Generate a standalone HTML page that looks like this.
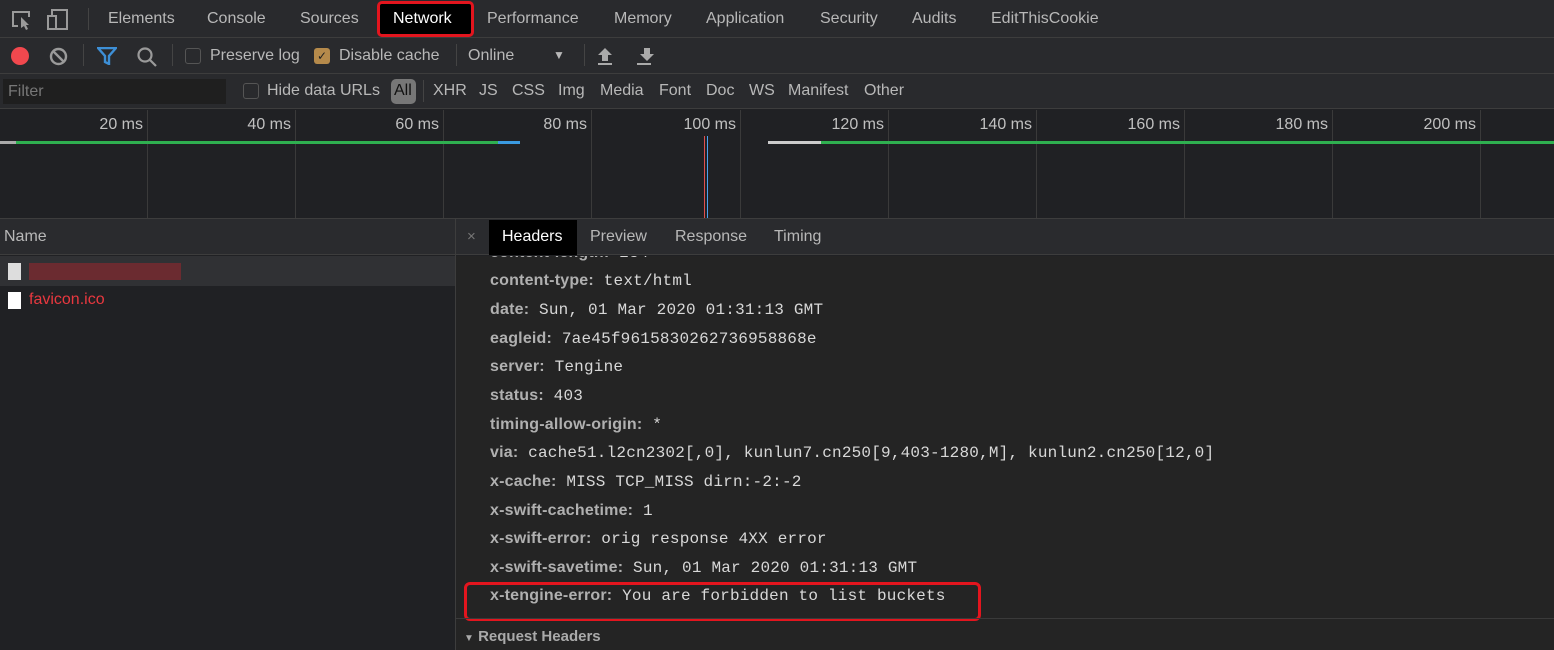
<!DOCTYPE html>
<html><head><meta charset="utf-8"><style>
*{margin:0;padding:0;box-sizing:border-box}
body{width:1554px;height:650px;overflow:hidden;background:#202124;font-family:"Liberation Sans",sans-serif;color:#c8c8c8;position:relative}
.abs{position:absolute}
.bar{position:absolute;left:0;width:1554px;background:#292a2d;border-bottom:1px solid #3d3d3d}
.t{position:absolute;font-size:16px;color:#b8b8b8;white-space:nowrap}
.mono{font-family:"Liberation Mono",monospace;font-size:16px;color:#d8d8d8;letter-spacing:0.2px}
.k{font-size:16px;color:#b0b0b0;font-weight:bold;font-family:"Liberation Sans",sans-serif;letter-spacing:0.2px}
.row{position:absolute;left:490px;white-space:nowrap}
.vl{position:absolute;top:110px;height:108px;width:1px;background:#3a3a3a}
.ms{position:absolute;top:116px;font-size:16px;color:#c0c0c0;text-align:right;width:100px}
</style></head><body>
<div class="bar" style="top:0;height:38px"></div>
<div class="bar" style="top:38px;height:36px"></div>
<div class="bar" style="top:74px;height:35px"></div>
<svg class="abs" style="left:10px;top:8px" width="60" height="24" viewBox="0 0 60 24" fill="none" stroke="#9a9a9a" stroke-width="2">
<path d="M8 18H3V4h16v5"/><path d="M11 9l8 8-3 0 2 4-2 1-2-4-3 2z" fill="#9a9a9a" stroke="none"/>
<rect x="38" y="8" width="8" height="13"/><path d="M42 8V2h15v19h-11"/>
</svg>
<div class="abs" style="left:88px;top:8px;width:1px;height:22px;background:#444"></div>
<div class="t" style="left:108px;top:10px">Elements</div>
<div class="t" style="left:207px;top:10px">Console</div>
<div class="t" style="left:300px;top:10px">Sources</div>
<div class="abs" style="left:377px;top:1px;width:97px;height:36px;background:#000;border:3px solid #e3151e;border-radius:5px"></div>
<div class="t" style="left:393px;top:10px;color:#fff">Network</div>
<div class="t" style="left:487px;top:10px">Performance</div>
<div class="t" style="left:614px;top:10px">Memory</div>
<div class="t" style="left:706px;top:10px">Application</div>
<div class="t" style="left:820px;top:10px">Security</div>
<div class="t" style="left:912px;top:10px">Audits</div>
<div class="t" style="left:991px;top:10px">EditThisCookie</div>
<div class="abs" style="left:11px;top:47px;width:18px;height:18px;border-radius:50%;background:#f1484e"></div>
<svg class="abs" style="left:49px;top:47px" width="19" height="19" viewBox="0 0 19 19" fill="none" stroke="#9a9a9a" stroke-width="2.4"><circle cx="9.5" cy="9.5" r="7.5"/><path d="M4.5 4.5l10 10"/></svg>
<div class="abs" style="left:83px;top:44px;width:1px;height:22px;background:#444"></div>
<svg class="abs" style="left:97px;top:47px" width="20" height="18" viewBox="0 0 20 18"><path d="M1 1h18l-7 8v8l-4-2V9z" fill="none" stroke="#3d8fd6" stroke-width="2.4"/></svg>
<svg class="abs" style="left:136px;top:46px" width="22" height="22" viewBox="0 0 22 22" fill="none" stroke="#9a9a9a" stroke-width="2.2"><circle cx="9" cy="9" r="6.5"/><path d="M14 14l6 6"/></svg>
<div class="abs" style="left:172px;top:44px;width:1px;height:22px;background:#444"></div>
<div class="abs" style="left:185px;top:48px;width:16px;height:16px;border:1.5px solid #555;border-radius:3px"></div>
<div class="t" style="left:210px;top:47px">Preserve log</div>
<div class="abs" style="left:314px;top:48px;width:16px;height:16px;background:#b58a4b;border-radius:3px;color:#222;font-size:12px;text-align:center;line-height:16px">✓</div>
<div class="t" style="left:339px;top:47px">Disable cache</div>
<div class="abs" style="left:456px;top:44px;width:1px;height:22px;background:#444"></div>
<div class="t" style="left:468px;top:47px">Online</div>
<div class="t" style="left:553px;top:48px;font-size:12px">▼</div>
<div class="abs" style="left:584px;top:44px;width:1px;height:22px;background:#444"></div>
<svg class="abs" style="left:597px;top:46px" width="60" height="20" viewBox="0 0 60 20" fill="#aaa"><path d="M8 2l7 7h-4v6H5V9H1z"/><rect x="1" y="17" width="14" height="2"/><path d="M47 2h6v6h4l-7 7-7-7h4z"/><rect x="40" y="17" width="14" height="2"/></svg>
<div class="abs" style="left:3px;top:79px;width:223px;height:25px;background:#1f1f1f"></div>
<div class="t" style="left:8px;top:83px;color:#777">Filter</div>
<div class="abs" style="left:243px;top:83px;width:16px;height:16px;border:1.5px solid #555;border-radius:3px"></div>
<div class="t" style="left:267px;top:82px">Hide data URLs</div>
<div class="abs" style="left:391px;top:79px;width:25px;height:25px;background:#777;border-radius:5px"></div>
<div class="t" style="left:394px;top:82px;color:#111">All</div>
<div class="abs" style="left:423px;top:80px;width:1px;height:22px;background:#444"></div>
<div class="t" style="left:433px;top:82px">XHR</div>
<div class="t" style="left:479px;top:82px">JS</div>
<div class="t" style="left:512px;top:82px">CSS</div>
<div class="t" style="left:558px;top:82px">Img</div>
<div class="t" style="left:600px;top:82px">Media</div>
<div class="t" style="left:659px;top:82px">Font</div>
<div class="t" style="left:706px;top:82px">Doc</div>
<div class="t" style="left:749px;top:82px">WS</div>
<div class="t" style="left:788px;top:82px">Manifest</div>
<div class="t" style="left:864px;top:82px">Other</div>
<div class="vl" style="left:147px"></div><div class="vl" style="left:295px"></div><div class="vl" style="left:443px"></div><div class="vl" style="left:591px"></div><div class="vl" style="left:740px"></div><div class="vl" style="left:888px"></div><div class="vl" style="left:1036px"></div><div class="vl" style="left:1184px"></div><div class="vl" style="left:1332px"></div><div class="vl" style="left:1480px"></div>
<div class="ms" style="left:43px">20 ms</div><div class="ms" style="left:191px">40 ms</div><div class="ms" style="left:339px">60 ms</div><div class="ms" style="left:487px">80 ms</div><div class="ms" style="left:636px">100 ms</div><div class="ms" style="left:784px">120 ms</div><div class="ms" style="left:932px">140 ms</div><div class="ms" style="left:1080px">160 ms</div><div class="ms" style="left:1228px">180 ms</div><div class="ms" style="left:1376px">200 ms</div>
<div class="abs" style="left:0;top:141px;width:16px;height:3px;background:#aaa"></div>
<div class="abs" style="left:16px;top:141px;width:482px;height:3px;background:#2fb050"></div>
<div class="abs" style="left:498px;top:141px;width:22px;height:3px;background:#3a9ae0"></div>
<div class="abs" style="left:768px;top:141px;width:53px;height:3px;background:#ccc"></div>
<div class="abs" style="left:821px;top:141px;width:733px;height:3px;background:#2fb050"></div>
<div class="abs" style="left:704px;top:136px;width:1px;height:82px;background:#e05050"></div>
<div class="abs" style="left:707px;top:136px;width:1px;height:82px;background:#4aa0f0"></div>
<div class="abs" style="left:0;top:218px;width:1554px;height:1px;background:#3d3d3d"></div>
<div class="abs" style="left:0;top:219px;width:455px;height:36px;background:#2a2b2e;border-bottom:1px solid #3d3d3d"></div>
<div class="t" style="left:4px;top:228px">Name</div>
<div class="abs" style="left:0;top:256px;width:455px;height:30px;background:#303134"></div>
<div class="abs" style="left:8px;top:263px;width:13px;height:17px;background:#ddd"></div>
<div class="abs" style="left:29px;top:263px;width:152px;height:17px;background:#7a2a30;opacity:.8"></div>
<div class="abs" style="left:8px;top:292px;width:13px;height:17px;background:#fff"></div>
<div class="t" style="left:29px;top:291px;color:#e8383f">favicon.ico</div>
<div class="abs" style="left:455px;top:219px;width:1px;height:431px;background:#3d3d3d"></div>
<div class="abs" style="left:456px;top:219px;width:1098px;height:36px;background:#2a2b2e;border-bottom:1px solid #3d3d3d"></div>
<div class="t" style="left:467px;top:228px;color:#777;font-size:15px">×</div>
<div class="abs" style="left:489px;top:220px;width:88px;height:35px;background:#000"></div>
<div class="t" style="left:502px;top:228px;color:#fff">Headers</div>
<div class="t" style="left:590px;top:228px">Preview</div>
<div class="t" style="left:675px;top:228px">Response</div>
<div class="t" style="left:774px;top:228px">Timing</div>
<div class="abs" style="left:456px;top:256px;width:1098px;height:394px;background:#242424;overflow:hidden">
<div class="row mono" style="left:34px;top:-12px"><span class="k">content-length:</span> 234</div>
</div>
<div class="row mono" style="top:272px"><span class="k">content-type:</span> text/html</div>
<div class="row mono" style="top:301px"><span class="k">date:</span> Sun, 01 Mar 2020 01:31:13 GMT</div>
<div class="row mono" style="top:330px"><span class="k">eagleid:</span> 7ae45f9615830262736958868e</div>
<div class="row mono" style="top:358px"><span class="k">server:</span> Tengine</div>
<div class="row mono" style="top:387px"><span class="k">status:</span> 403</div>
<div class="row mono" style="top:416px"><span class="k">timing-allow-origin:</span> *</div>
<div class="row mono" style="top:444px"><span class="k">via:</span> cache51.l2cn2302[,0], kunlun7.cn250[9,403-1280,M], kunlun2.cn250[12,0]</div>
<div class="row mono" style="top:473px"><span class="k">x-cache:</span> MISS TCP_MISS dirn:-2:-2</div>
<div class="row mono" style="top:502px"><span class="k">x-swift-cachetime:</span> 1</div>
<div class="row mono" style="top:530px"><span class="k">x-swift-error:</span> orig response 4XX error</div>
<div class="row mono" style="top:559px"><span class="k">x-swift-savetime:</span> Sun, 01 Mar 2020 01:31:13 GMT</div>
<div class="row mono" style="top:587px"><span class="k">x-tengine-error:</span> You are forbidden to list buckets</div>
<div class="abs" style="left:464px;top:582px;width:517px;height:39px;border:3px solid #e3151e;border-radius:6px"></div>
<div class="abs" style="left:456px;top:618px;width:1098px;height:1px;background:#3a3a3a"></div>
<div class="t" style="left:464px;top:628px;font-size:15px;font-weight:bold;color:#aaa"><span style="font-size:10px">▼</span> Request Headers</div>
</body></html>
